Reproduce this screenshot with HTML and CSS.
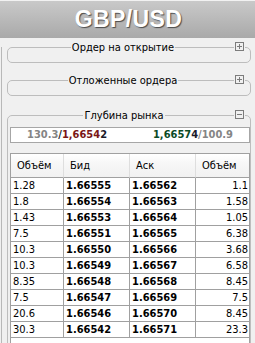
FILE: index.html
```html
<!DOCTYPE html>
<html lang="ru">
<head>
<meta charset="utf-8">
<title>GBP/USD</title>
<link rel="stylesheet" href="styles.css">
</head>
<body>
<div class="window">
  <div class="title">GBP/USD</div>
  <div class="panel">
    <section class="group g1">
      <div class="group-head"><span class="group-title">Ордер на открытие</span></div>
      <svg class="toggle" width="9" height="9" viewBox="0 0 9 9"><rect x="0.5" y="0.5" width="8" height="8" fill="#f0f0f0" stroke="#7c7c7c"/><path d="M2 4.5H7M4.5 2V7" stroke="#7c7c7c" stroke-width="1"/></svg>
      <div class="group-body"></div>
    </section>
    <section class="group g2">
      <div class="group-head"><span class="group-title">Отложенные ордера</span></div>
      <svg class="toggle" width="9" height="9" viewBox="0 0 9 9"><rect x="0.5" y="0.5" width="8" height="8" fill="#f0f0f0" stroke="#7c7c7c"/><path d="M2 4.5H7M4.5 2V7" stroke="#7c7c7c" stroke-width="1"/></svg>
      <div class="group-body"></div>
    </section>
    <section class="group g3">
      <div class="group-head"><span class="group-title">Глубина рынка</span></div>
      <svg class="toggle" width="9" height="9" viewBox="0 0 9 9"><rect x="0.5" y="0.5" width="8" height="8" fill="#f0f0f0" stroke="#7c7c7c"/><path d="M2 4.5H7" stroke="#7c7c7c" stroke-width="1"/></svg>
      <div class="depth">
        <div class="quote">
          <span><span class="vol">130.3</span>/<span class="red">1,6654</span>2</span>
          <span><span class="green">1,6657</span>4<span class="vol">/100.9</span></span>
        </div>
        <div class="book">
          <table>
            <colgroup><col class="c1"><col class="c2"><col class="c3"><col class="c4"></colgroup>
            <thead>
              <tr><th>Объём</th><th>Бид</th><th>Аск</th><th>Объём</th></tr>
            </thead>
            <tbody>
              <tr><td>1.28</td><td class="px">1.66555</td><td class="px">1.66562</td><td class="num">1.1</td></tr>
              <tr><td>1.8</td><td class="px">1.66554</td><td class="px">1.66563</td><td class="num">1.58</td></tr>
              <tr><td>1.43</td><td class="px">1.66553</td><td class="px">1.66564</td><td class="num">1.05</td></tr>
              <tr><td>7.5</td><td class="px">1.66551</td><td class="px">1.66565</td><td class="num">6.38</td></tr>
              <tr><td>10.3</td><td class="px">1.66550</td><td class="px">1.66566</td><td class="num">3.68</td></tr>
              <tr><td>10.3</td><td class="px">1.66549</td><td class="px">1.66567</td><td class="num">6.58</td></tr>
              <tr><td>8.35</td><td class="px">1.66548</td><td class="px">1.66568</td><td class="num">8.45</td></tr>
              <tr><td>7.5</td><td class="px">1.66547</td><td class="px">1.66569</td><td class="num">7.5</td></tr>
              <tr><td>20.6</td><td class="px">1.66546</td><td class="px">1.66570</td><td class="num">8.45</td></tr>
              <tr><td>30.3</td><td class="px">1.66542</td><td class="px">1.66571</td><td class="num">23.3</td></tr>
            </tbody>
          </table>
        </div>
      </div>
    </section>
  </div>
</div>
</body>
</html>
```

FILE: styles.css
```css
html, body {
  margin: 0;
  padding: 0;
}
body {
  width: 255px;
  height: 343px;
  overflow: hidden;
  background: #f0f0f0;
  font-family: "DejaVu Sans Condensed", "DejaVu Sans", sans-serif;
  font-stretch: condensed;
  font-size: 11px;
  color: #000;
}
.window {
  width: 255px;
  height: 343px;
  overflow: hidden;
}
.title {
  box-sizing: border-box;
  height: 38px;
  border-top: 1px solid #f2f2f2;
  padding-top: 1px;
  background: linear-gradient(#c9c9c9, #a9a9a9);
  color: #fff;
  font-family: "Liberation Sans", Arial, sans-serif;
  font-stretch: normal;
  font-weight: bold;
  font-size: 23px;
  letter-spacing: 0.4px;
  line-height: 35px;
  text-align: center;
  text-shadow: 1px 1px 1px #4a4a4a;
  padding-left: 2px;
}
.panel {
  margin-left: 1px;
  border-left: 1px solid #b8b8b8;
  padding: 0 4px 0 5px;
}
.group {
  position: relative;
  border: 1px solid #bdbdbd;
  border-radius: 5px;
}
.g1 { margin-top: 9px; }
.g2 { margin-top: 17px; }
.g3 { margin-top: 19px; padding: 0 0 0 2px; }
.group-head {
  position: relative;
  margin-top: -7px;
  height: 13px;
  line-height: 13px;
  text-align: center;
  padding-right: 12px;
}
.group-title {
  background: #f0f0f0;
  padding: 0 1px;
}
.group-body {
  height: 8px;
}
.toggle {
  position: absolute;
  right: 6px;
  top: -6px;
  display: block;
  background: #f0f0f0;
  box-shadow: 0 0 0 1px #f0f0f0;
}
.depth {
  padding-top: 5px;
}
.quote {
  box-sizing: border-box;
  height: 16px;
  border: 1px solid #a6a6a6;
  background: #fff;
  display: flex;
  justify-content: space-between;
  padding: 0 16px;
  line-height: 14px;
  font-weight: bold;
  color: #1a1a2a;
}
.vol { color: #858585; }
.red { color: #7a1616; }
.green { color: #0b4a26; }
.book {
  margin-top: 10px;
  width: 240px;
  height: 200px;
  box-sizing: border-box;
  border: 1px solid #a0a0a0;
  background: #fff;
}
table {
  width: 238px;
  border-collapse: separate;
  border-spacing: 0;
  table-layout: fixed;
}
col.c1 { width: 53px; }
col.c2 { width: 66px; }
col.c3 { width: 66px; }
col.c4 { width: 53px; }
th {
  height: 23px;
  padding: 1px 0 0 6px;
  box-sizing: border-box;
  text-align: left;
  font-weight: normal;
  background: linear-gradient(#ffffff, #f7f7f7 40%, #f1f1f1);
  border-right: 1px solid #dedede;
  border-bottom: 1px solid #a0a0a0;
  line-height: 22px;
}
th:last-child { border-right: none; }
td {
  height: 16px;
  box-sizing: border-box;
  padding: 0 0 0 2px;
  line-height: 15px;
  border-right: 1px solid #a0a0a0;
  border-bottom: 1px solid #a0a0a0;
  white-space: nowrap;
}
td:last-child { border-right: none; }
td.px {
  font-weight: bold;
  padding-left: 2px;
}
td.num {
  text-align: right;
  padding: 0 1px 0 0;
}
```
